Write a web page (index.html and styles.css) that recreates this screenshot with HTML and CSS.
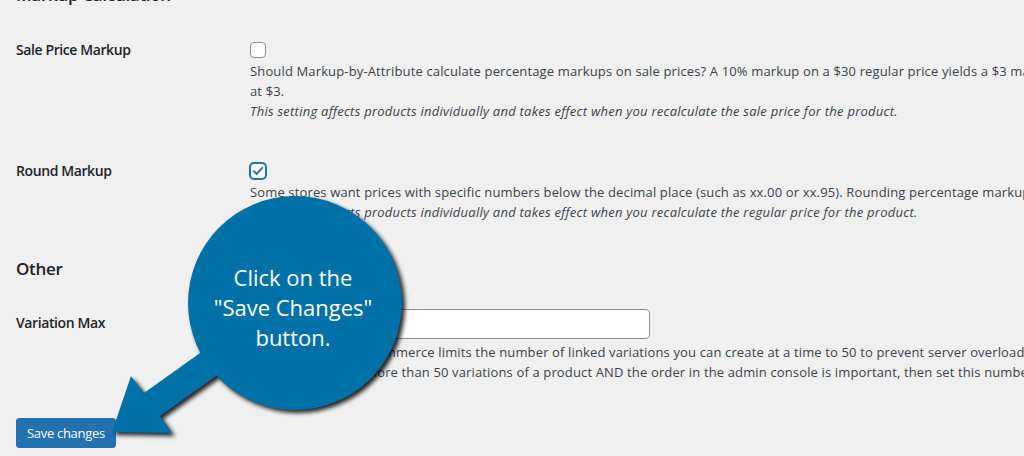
FILE: index.html
```html
<!DOCTYPE html>
<html lang="en">

<head>
  <meta charset="UTF-8">
  <meta name="viewport" content="width=device-width, initial-scale=1.0">
  <title>Markup-by-Attribute Settings</title>
  <link rel="stylesheet" href="styles.css">
</head>

<body>
  <div class="wrap">
    <h2 class="section-title first">Markup Calculation</h2>

    <div class="field">
      <div class="field-label">Sale Price Markup</div>
      <div class="field-control">
        <span class="checkbox"></span>
        <p class="description">Should Markup-by-Attribute calculate percentage markups on sale prices? A 10% markup on a $30 regular price yields a $3 markup. If checked, a $25 sale price is marked up<br>at $3.</p>
        <p class="description note">This setting affects products individually and takes effect when you recalculate the sale price for the product.</p>
      </div>
    </div>

    <div class="field second">
      <div class="field-label">Round Markup</div>
      <div class="field-control">
        <span class="checkbox checked">
          <svg viewBox="0 0 16 16" width="14" height="14"><path d="M3.2 8.2 L6.6 11.4 L12.8 4.4" fill="none" stroke="#2271b1" stroke-width="2.2" stroke-linecap="round" stroke-linejoin="round"/></svg>
        </span>
        <p class="description">Some stores want prices with specific numbers below the decimal place (such as xx.00 or xx.95). Rounding percentage markups keeps those endings.</p>
        <p class="description note">This setting affects products individually and takes effect when you recalculate the regular price for the product.</p>
      </div>
    </div>

    <h2 class="section-title other">Other</h2>

    <div class="field third">
      <div class="field-label input-label">Variation Max</div>
      <div class="field-control">
        <input type="text" class="regular-text">
        <p class="description after-input">Be aware that WooCommerce limits the number of linked variations you can create at a time to 50 to prevent server overload. If you<br>need to work with more than 50 variations of a product AND the order in the admin console is important, then set this number higher.</p>
      </div>
    </div>

    <button type="submit" class="button-primary">Save changes</button>
  </div>

  <div class="callout">
    <svg class="callout-shape" width="1024" height="456" viewBox="0 0 1024 456">
      <g>
        <circle cx="295" cy="303" r="107" fill="#0071a7"/>
        <polygon points="221,338 144,393 131,376 112,432 172,433 160,416 237,361" fill="#0071a7"/>
      </g>
    </svg>
    <div class="callout-text">Click on the<br>"Save Changes"<br>button.</div>
  </div>
</body>

</html>
```

FILE: styles.css
```css
body {
  margin: 0;
  background: #f0f0f1;
  color: #3c434a;
  font-family: "Segoe UI", "Open Sans", sans-serif;
  font-size: 13px;
  overflow: hidden;
}

.wrap {
  width: 1500px;
  padding: 0 16px;
}

.section-title {
  margin: 0;
  color: #1d2327;
  font-size: 17px;
  line-height: 22px;
  font-weight: 600;
  letter-spacing: -0.3px;
}

.section-title.first {
  margin-top: -16px;
}

.section-title.other {
  margin-top: 36px;
}

.field {
  display: grid;
  grid-template-columns: 234px 1fr;
  margin-top: 35px;
}

.field.second {
  margin-top: 41px;
}

.field.third {
  margin-top: 29px;
}

.field-label {
  color: #1d2327;
  font-size: 14px;
  line-height: 18px;
  font-weight: 600;
  letter-spacing: -0.4px;
}

.input-label {
  margin-top: 5px;
}

.checkbox {
  display: flex;
  align-items: center;
  justify-content: center;
  box-sizing: border-box;
  width: 16px;
  height: 16px;
  margin-top: 1px;
  border: 1px solid #8c8f94;
  border-radius: 4px;
  background: #fff;
}

.checkbox.checked {
  border-color: #2271b1;
  box-shadow: 0 0 0 1px #2271b1;
}

.description {
  margin: 3px 0 0;
  line-height: 20px;
  letter-spacing: 0.14px;
  white-space: nowrap;
}

.description.note {
  margin-top: 0;
  font-style: italic;
  letter-spacing: 0.25px;
}

.description.after-input {
  margin-top: 4px;
  line-height: 19.5px;
}

.regular-text {
  display: block;
  box-sizing: border-box;
  width: 400px;
  height: 30px;
  margin: 0;
  padding: 0 8px;
  border: 1px solid #8c8f94;
  border-radius: 4px;
  background: #fff;
}

.button-primary {
  display: block;
  margin-top: 36px;
  height: 30px;
  padding: 0 10px;
  border: 1px solid #2271b1;
  border-radius: 3px;
  background: #2271b1;
  color: #fff;
  font-family: inherit;
  font-size: 13px;
  line-height: 28px;
  letter-spacing: -0.3px;
}

.callout {
  position: absolute;
  top: 0;
  left: 0;
  width: 1024px;
  height: 456px;
  pointer-events: none;
}

.callout-shape {
  display: block;
  filter: drop-shadow(3px 3px 2px rgba(0, 0, 0, 0.85));
}

.callout-text {
  position: absolute;
  top: 262px;
  left: 183px;
  width: 220px;
  color: #fff;
  font-family: "Open Sans", sans-serif;
  font-size: 22px;
  line-height: 30px;
  text-align: center;
}
```
